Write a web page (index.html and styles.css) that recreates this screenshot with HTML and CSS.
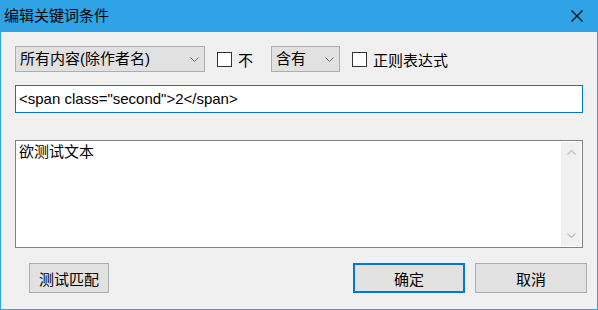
FILE: index.html
```html
<!DOCTYPE html>
<html lang="zh-CN">
<head>
    <meta charset="UTF-8">
    <title>编辑关键词条件</title>
    <link rel="stylesheet" href="styles.css">
</head>
<body>
    <div class="window">
        <div class="titlebar">
            <span class="title">编辑关键词条件</span>
            <svg class="close" width="12" height="12" viewBox="0 0 12 12">
                <path d="M0.5 0.5 L11.5 11.5 M11.5 0.5 L0.5 11.5" stroke="#000" stroke-width="1.1" fill="none"/>
            </svg>
        </div>

        <div class="content">
            <div class="row-options">
                <div class="combo combo-wide">
                    <span>所有内容(除作者名)</span>
                    <svg width="9" height="5" viewBox="0 0 9 5"><path d="M0.5 0.5 L4.5 4.5 L8.5 0.5" stroke="#6d6d6d" fill="none"/></svg>
                </div>
                <label class="check check-not">
                    <span class="box"></span>
                    <span>不</span>
                </label>
                <div class="combo combo-small">
                    <span>含有</span>
                    <svg width="9" height="5" viewBox="0 0 9 5"><path d="M0.5 0.5 L4.5 4.5 L8.5 0.5" stroke="#6d6d6d" fill="none"/></svg>
                </div>
                <label class="check check-regex">
                    <span class="box"></span>
                    <span>正则表达式</span>
                </label>
            </div>

            <div class="keyword">&lt;span class="second"&gt;2&lt;/span&gt;</div>

            <div class="sample">
                <div class="sample-text">欲测试文本</div>
                <div class="scrollbar">
                    <svg width="9" height="5" viewBox="0 0 9 5"><path d="M0.5 4.5 L4.5 0.5 L8.5 4.5" stroke="#c2c2c2" stroke-width="1.3" fill="none"/></svg>
                    <svg width="9" height="5" viewBox="0 0 9 5"><path d="M0.5 0.5 L4.5 4.5 L8.5 0.5" stroke="#c2c2c2" stroke-width="1.3" fill="none"/></svg>
                </div>
            </div>

            <div class="buttons">
                <button class="btn btn-test">测试匹配</button>
                <button class="btn btn-ok">确定</button>
                <button class="btn btn-cancel">取消</button>
            </div>
        </div>
    </div>
</body>
</html>
```

FILE: styles.css
```css
html, body {
    margin: 0;
    padding: 0;
}

body {
    font-family: "Liberation Sans", "Noto Sans CJK SC", sans-serif;
    font-size: 15px;
    color: #000;
}

.window {
    width: 598px;
    height: 310px;
    box-sizing: border-box;
    border: 1px solid #2fa3e6;
    border-top: none;
    background: #f0f0f0;
}

.titlebar {
    height: 32px;
    background: #2fa3e6;
    display: flex;
    align-items: center;
    justify-content: space-between;
    padding: 0 14px 0 3px;
}

.title {
    font-size: 15px;
    line-height: 18px;
}

.content {
    padding: 14px 10px 0 14px;
}

/* primera fila: combos y casillas */
.row-options {
    display: flex;
    align-items: center;
    height: 26px;
}

.combo {
    flex-shrink: 0;
    height: 26px;
    box-sizing: border-box;
    border: 1px solid #adadad;
    background: #e1e1e1;
    display: flex;
    align-items: center;
    justify-content: space-between;
    padding: 0 5px 0 4px;
    line-height: 18px;
}

.combo-wide {
    width: 190px;
}

.combo-small {
    width: 69px;
}

.check {
    flex-shrink: 0;
    display: flex;
    align-items: center;
    gap: 6px;
    margin-left: 12px;
}

.check-not {
    width: 54px;
}

.check-regex {
    margin-left: 12px;
}

.box {
    width: 15px;
    height: 15px;
    box-sizing: border-box;
    border: 1px solid #333;
    background: #fff;
}

.keyword {
    margin-top: 13px;
    width: 568px;
    height: 28px;
    box-sizing: border-box;
    border: 1px solid #0078d7;
    background: #fff;
    padding: 0 3px;
    line-height: 26px;
}

.sample {
    margin-top: 27px;
    width: 568px;
    height: 108px;
    box-sizing: border-box;
    border: 1px solid #828282;
    background: #fff;
    display: flex;
}

.sample-text {
    flex: 1;
    padding: 1px 3px;
    line-height: 19px;
}

.scrollbar {
    width: 20px;
    margin: 1px;
    background: #f0f0f0;
    display: flex;
    flex-direction: column;
    justify-content: space-between;
    align-items: center;
    padding: 8px 0 8px;
    box-sizing: border-box;
}

.buttons {
    margin-top: 15px;
    display: flex;
    padding-left: 14px;
}

.btn {
    height: 30px;
    box-sizing: border-box;
    border: 1px solid #adadad;
    background: #e1e1e1;
    font-family: "Liberation Sans", "Noto Sans CJK SC", sans-serif;
    font-size: 15px;
    color: #000;
    padding: 0;
}

.btn-test {
    width: 80px;
}

.btn-ok {
    width: 112px;
    margin-left: auto;
    border: 2px solid #0078d7;
}

.btn-cancel {
    width: 112px;
    margin-left: 10px;
}
```
